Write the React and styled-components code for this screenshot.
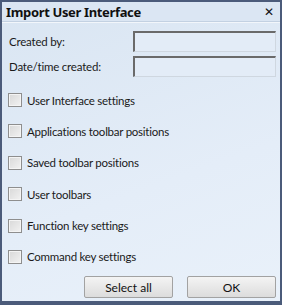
import React from 'react';
import styled, { createGlobalStyle } from 'styled-components';

const GlobalStyle = createGlobalStyle`
  html, body {
    margin: 0;
    padding: 0;
    background: #4b5b7a;
  }
  body {
    font-family: Lato, "Noto Sans", sans-serif;
  }
`;

const Dialog = styled.div`
  box-sizing: border-box;
  width: 282px;
  height: 305px;
  border: 2px solid #4b5b7a;
  border-bottom-width: 4px;
  background: linear-gradient(160deg, #d9e5f2 0%, #e4edf8 60%, #e9f1fa 100%);
  display: flex;
  flex-direction: column;
`;

const TitleBar = styled.div`
  height: 19px;
  display: flex;
  align-items: center;
  justify-content: space-between;
  padding: 0 6px 0 4px;
  border-bottom: 1px solid #c3d1e2;
  box-shadow: 0 1px 0 #f2f6fb;
  background: #dbe6f3;
`;

const Title = styled.div`
  font-family: "Noto Sans", sans-serif;
  font-size: 13px;
  font-weight: 700;
  color: #101010;
  letter-spacing: -0.35px;
`;

const Close = styled.div`
  font-family: "DejaVu Sans", sans-serif;
  font-size: 12px;
  font-weight: 700;
  color: #111;
  line-height: 1;
`;

const Body = styled.div`
  flex: 1;
  display: flex;
  flex-direction: column;
  padding: 9px 4px 0 6px;
`;

const FieldRow = styled.div`
  display: flex;
  align-items: center;
  justify-content: space-between;
  height: 21px;
  margin-bottom: 4px;
`;

const Label = styled.span`
  font-size: 11.5px;
  letter-spacing: -0.2px;
  color: #1a1a1a;
  padding-left: 1px;
`;

const Input = styled.div`
  box-sizing: border-box;
  width: 143px;
  height: 21px;
  border-top: 2px solid #6a6a6a;
  border-left: 2px solid #6a6a6a;
  border-right: 1px solid #cfd7e0;
  border-bottom: 1px solid #cfd7e0;
  background: #e3ecf7;
`;

const Options = styled.div`
  display: flex;
  flex-direction: column;
  gap: 17.4px;
  margin-top: 12px;
`;

const Option = styled.label`
  display: flex;
  align-items: center;
  gap: 5px;
  height: 14px;
  font-size: 11.5px;
  letter-spacing: -0.25px;
  color: #1a1a1a;
`;

const Box = styled.span`
  box-sizing: border-box;
  width: 14px;
  height: 14px;
  border: 1px solid #8e8e8e;
  background: linear-gradient(135deg, #d8d8d8, #f2f2f2);
  box-shadow: inset 0 0 0 1px #f4f4f4;
`;

const Buttons = styled.div`
  display: flex;
  justify-content: flex-end;
  gap: 14px;
  margin-top: auto;
  margin-bottom: 3px;
`;

const Button = styled.button`
  box-sizing: border-box;
  width: 89px;
  height: 22px;
  border: 1px solid #a2a2a2;
  border-radius: 2px;
  background: linear-gradient(#f4f4f4, #dcdcdc);
  font-family: inherit;
  font-size: 12px;
  color: #111;
  padding: 0;
`;

const options = [
  'User Interface settings',
  'Applications toolbar positions',
  'Saved toolbar positions',
  'User toolbars',
  'Function key settings',
  'Command key settings',
];

export default function App() {
  return (
    <>
      <GlobalStyle />
      <Dialog>
        <TitleBar>
          <Title>Import User Interface</Title>
          <Close>✕</Close>
        </TitleBar>
        <Body>
          <FieldRow>
            <Label>Created by:</Label>
            <Input />
          </FieldRow>
          <FieldRow>
            <Label>Date/time created:</Label>
            <Input />
          </FieldRow>
          <Options>
            {options.map(o => (
              <Option key={o}>
                <Box />
                {o}
              </Option>
            ))}
          </Options>
          <Buttons>
            <Button>Select all</Button>
            <Button>OK</Button>
          </Buttons>
        </Body>
      </Dialog>
    </>
  );
}
